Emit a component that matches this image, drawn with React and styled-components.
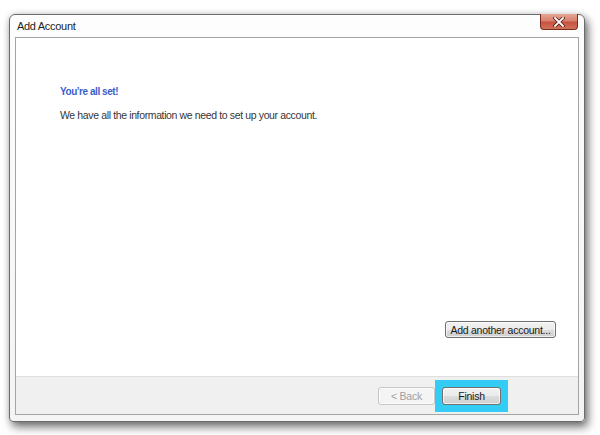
import React from 'react';
import styled, { createGlobalStyle } from 'styled-components';

const GlobalStyle = createGlobalStyle`
  html, body {
    margin: 0;
    padding: 0;
    background: #ffffff;
  }
  body {
    font-family: "Liberation Sans", Arial, sans-serif;
    font-size: 10.5px;
    color: #333;
  }
`;

const Page = styled.div`
  width: 600px;
  height: 435px;
  padding: 14px 0 0 9px;
  box-sizing: border-box;
`;

const Window = styled.div`
  width: 576px;
  height: 408px;
  box-sizing: border-box;
  border: 1px solid #6b6b6b;
  border-radius: 6px 6px 4px 4px;
  background: linear-gradient(#fdfdfd, #f4f4f4);
  box-shadow: 3px 5px 10px rgba(0, 0, 0, 0.55), 0 0 6px rgba(0, 0, 0, 0.15);
  display: flex;
  flex-direction: column;
  padding: 0 5px 6px 5px;
`;

const TitleBar = styled.div`
  height: 22px;
  display: flex;
  align-items: flex-start;
  justify-content: space-between;
`;

const Title = styled.div`
  font-size: 11px;
  letter-spacing: -0.3px;
  color: #1e1e1e;
  padding: 5px 0 0 2px;
`;

const CloseButton = styled.button`
  width: 38px;
  height: 16px;
  margin: -1px 1px 0 0;
  padding: 0;
  border: 1px solid #7a2a1e;
  border-top: none;
  border-radius: 0 0 4px 4px;
  background: linear-gradient(#e6a697 0%, #d8806c 45%, #c55440 55%, #d27158 100%);
  display: flex;
  align-items: center;
  justify-content: center;
`;

const Content = styled.div`
  flex: 1;
  border: 1px solid #a4a4a4;
  background: #ffffff;
  display: flex;
  flex-direction: column;
`;

const Body = styled.div`
  flex: 1;
  display: flex;
  flex-direction: column;
  padding: 48px 22px 38px 44px;
`;

const Heading = styled.div`
  font-weight: bold;
  color: #3a5fcd;
  font-size: 10px;
  letter-spacing: -0.45px;
`;

const Message = styled.div`
  margin-top: 12px;
  color: #363636;
  letter-spacing: -0.37px;
`;

const Spacer = styled.div`
  flex: 1;
`;

const Row = styled.div`
  display: flex;
  justify-content: flex-end;
  align-items: center;
`;

const Button = styled.button`
  height: ${(p) => p.h || 18}px;
  width: ${(p) => p.w || 58}px;
  padding: 0;
  box-sizing: border-box;
  font-family: "Liberation Sans", Arial, sans-serif;
  font-size: 10.5px;
  letter-spacing: -0.25px;
  white-space: nowrap;
  color: ${(p) => (p.disabled ? '#a0a0a0' : '#1a1a1a')};
  border: 1px solid ${(p) => (p.disabled ? '#c6c6c6' : '#707070')};
  border-radius: 3px;
  background: ${(p) =>
    p.disabled
      ? '#f4f4f4'
      : 'linear-gradient(#f2f2f2 0%, #ebebeb 50%, #dddddd 51%, #cfcfcf 100%)'};
  box-shadow: inset 0 0 0 1px rgba(255, 255, 255, 0.7);
`;

const Footer = styled.div`
  height: 38px;
  border-top: 1px solid #dfdfdf;
  background: #f0f0f0;
  display: flex;
  align-items: center;
  justify-content: flex-end;
  padding-right: 70px;
  box-sizing: border-box;
`;

const Focus = styled.div`
  background: #33ccf5;
  padding: 7px;
  display: flex;
`;

const App = () => (
  <>
    <GlobalStyle />
    <Page>
      <Window>
        <TitleBar>
          <Title>Add Account</Title>
          <CloseButton aria-label="Close">
            <svg width="12" height="10" viewBox="0 0 12 10">
              <path
                d="M2 1 L10 9 M10 1 L2 9"
                stroke="#5a1d12"
                strokeWidth="3.4"
                strokeLinecap="square"
              />
              <path
                d="M2 1 L10 9 M10 1 L2 9"
                stroke="#ffffff"
                strokeWidth="1.8"
                strokeLinecap="square"
              />
            </svg>
          </CloseButton>
        </TitleBar>
        <Content>
          <Body>
            <Heading>You’re all set!</Heading>
            <Message>We have all the information we need to set up your account.</Message>
            <Spacer />
            <Row>
              <Button w={111} h={17}>Add another account...</Button>
            </Row>
          </Body>
          <Footer>
            <Button disabled w={57}>&lt; Back</Button>
            <Focus>
              <Button w={59}>Finish</Button>
            </Focus>
          </Footer>
        </Content>
      </Window>
    </Page>
  </>
);

export default App;
